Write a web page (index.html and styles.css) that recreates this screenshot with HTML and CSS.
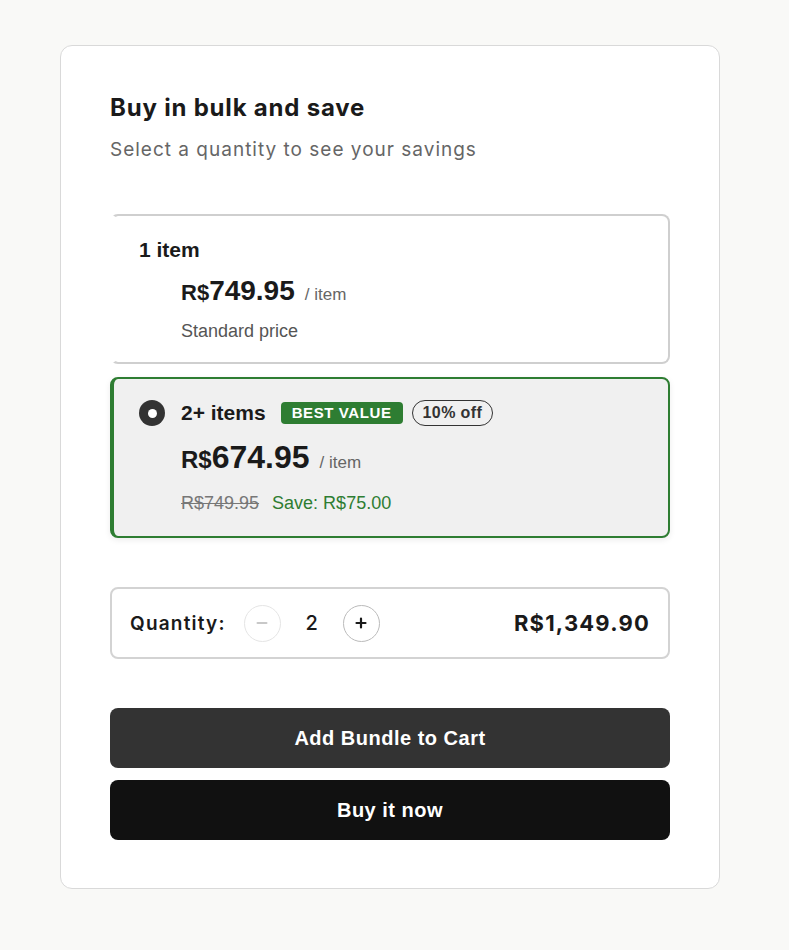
FILE: index.html
```html
<!DOCTYPE html>
<html lang="en">
<head>
<meta charset="utf-8">
<title>Buy in bulk and save</title>
<link rel="stylesheet" href="styles.css">
</head>
<body>
<div class="page">
  <section class="bundle">
    <h2 class="title">Buy in bulk and save</h2>
    <p class="subtitle">Select a quantity to see your savings</p>

    <div class="options">
      <div class="option">
        <div class="opt-head">
          <span class="opt-name">1 item</span>
        </div>
        <div class="opt-body">
          <div class="price-row">
            <span class="price"><span class="cur">R$</span>749.95</span>
            <span class="per">/ item</span>
          </div>
          <div class="note">Standard price</div>
        </div>
      </div>

      <div class="option selected">
        <div class="opt-head">
          <span class="radio"></span>
          <span class="opt-name">2+ items</span>
          <span class="badge">BEST VALUE</span>
          <span class="pill">10% off</span>
        </div>
        <div class="opt-body">
          <div class="price-row">
            <span class="price big"><span class="cur">R$</span>674.95</span>
            <span class="per">/ item</span>
          </div>
          <div class="note">
            <span class="was">R$749.95</span>
            <span class="save">Save: R$75.00</span>
          </div>
        </div>
      </div>
    </div>

    <div class="qty">
      <span class="qty-label">Quantity:</span>
      <span class="step minus">
        <svg viewBox="0 0 12 12" width="12" height="12"><path d="M1.5 6h9" stroke="currentColor" stroke-width="2" stroke-linecap="round"/></svg>
      </span>
      <span class="qty-val">2</span>
      <span class="step plus">
        <svg viewBox="0 0 12 12" width="12" height="12"><path d="M1.5 6h9M6 1.5v9" stroke="currentColor" stroke-width="2.2" stroke-linecap="round"/></svg>
      </span>
      <span class="total">R$1,349.90</span>
    </div>

    <div class="actions">
      <button class="btn btn-cart">Add Bundle to Cart</button>
      <button class="btn btn-buy">Buy it now</button>
    </div>
  </section>
</div>
</body>
</html>
```

FILE: styles.css
```css
html, body {
  margin: 0;
  padding: 0;
  background: #f9f9f7;
}
.page {
  padding: 45px 69px 60px 60px;
}
.bundle {
  width: 560px;
  background: #fff;
  border: 1px solid #d9d9d9;
  border-radius: 12px;
  padding: 47px 49px 48px 49px;
  font-family: "Liberation Sans", Arial, sans-serif;
  color: #1a1a1a;
}
.title {
  margin: 0;
  font-family: Inter, "Liberation Sans", sans-serif;
  font-size: 24px;
  font-weight: 700;
  letter-spacing: 0.8px;
  line-height: 30px;
  color: #1a1a1a;
}
.subtitle {
  margin: 15px 0 0;
  font-family: Inter, "Liberation Sans", sans-serif;
  font-size: 19px;
  letter-spacing: 1px;
  line-height: 24px;
  color: #666;
}
.options {
  margin-top: 52px;
  display: flex;
  flex-direction: column;
  gap: 13px;
}
.option {
  border: 2px solid #cfcfcf;
  border-left: 4px solid transparent;
  border-radius: 8px;
  padding: 21px 24px 21px 25px;
  background: #fff;
}
.option.selected {
  border-color: #2e7d32;
  background: #f0f0f0;
  box-shadow: 0 2px 6px rgba(0,0,0,0.08);
  padding-bottom: 23px;
}
.opt-head {
  display: flex;
  align-items: center;
  min-height: 26px;
}
.opt-name {
  font-size: 21px;
  font-weight: 700;
  color: #1a1a1a;
}
.radio {
  width: 26px;
  height: 26px;
  border-radius: 50%;
  background: #333;
  display: flex;
  align-items: center;
  justify-content: center;
  margin-right: 16px;
  flex: none;
}
.radio::after {
  content: "";
  width: 9px;
  height: 9px;
  border-radius: 50%;
  background: #fff;
}
.badge {
  margin-left: 15px;
  background: #2e7d32;
  color: #fff;
  font-size: 15px;
  font-weight: 700;
  letter-spacing: 0.6px;
  padding: 3px 11px;
  border-radius: 4px;
  line-height: 16px;
}
.pill {
  margin-left: 9px;
  border: 1px solid #333;
  border-radius: 13px;
  font-size: 16px;
  font-weight: 700;
  letter-spacing: 0.4px;
  padding: 3px 10px;
  line-height: 18px;
  color: #333;
}
.opt-body {
  padding-left: 42px;
}
.price-row {
  display: flex;
  align-items: baseline;
  margin-top: 11px;
}
.selected .price-row {
  margin-top: 13px;
}
.price {
  font-size: 28px;
  font-weight: 700;
  line-height: 34px;
  color: #1a1a1a;
}
.price.big {
  font-size: 32px;
  line-height: 36px;
}
.cur {
  font-size: 22px;
}
.big .cur {
  font-size: 24px;
}
.per {
  margin-left: 10px;
  font-size: 17px;
  color: #666;
}
.note {
  margin-top: 11px;
  font-size: 18px;
  line-height: 20px;
  color: #555;
}
.selected .note {
  margin-top: 15px;
}
.was {
  color: #777;
  text-decoration: line-through;
}
.save {
  margin-left: 8px;
  color: #2e7d32;
}
.qty {
  margin-top: 49px;
  display: flex;
  align-items: center;
  height: 68px;
  border: 2px solid #d3d3d3;
  border-radius: 8px;
  padding: 0 18px;
  font-family: Inter, "Liberation Sans", sans-serif;
}
.qty-label {
  font-size: 19px;
  font-weight: 600;
  letter-spacing: 1.2px;
  color: #1a1a1a;
}
.step {
  width: 35px;
  height: 35px;
  border-radius: 50%;
  display: flex;
  align-items: center;
  justify-content: center;
  flex: none;
}
.step.minus {
  margin-left: 18px;
  border: 1.5px solid #e5e5e5;
  color: #c8c8c8;
}
.step.plus {
  border: 1.5px solid #bbb;
  color: #1a1a1a;
}
.qty-val {
  width: 62px;
  text-align: center;
  font-size: 20px;
  font-weight: 500;
  color: #1a1a1a;
}
.total {
  margin-left: auto;
  font-size: 22px;
  font-weight: 700;
  letter-spacing: 1.2px;
  color: #1a1a1a;
}
.actions {
  margin-top: 49px;
  display: flex;
  flex-direction: column;
  gap: 12px;
}
.btn {
  display: block;
  width: 100%;
  height: 60px;
  border: none;
  border-radius: 8px;
  color: #fff;
  font-family: "Liberation Sans", Arial, sans-serif;
  font-size: 20px;
  font-weight: 700;
  letter-spacing: 0.5px;
  cursor: pointer;
}
.btn-cart {
  background: #333;
}
.btn-buy {
  background: #111;
}
```
